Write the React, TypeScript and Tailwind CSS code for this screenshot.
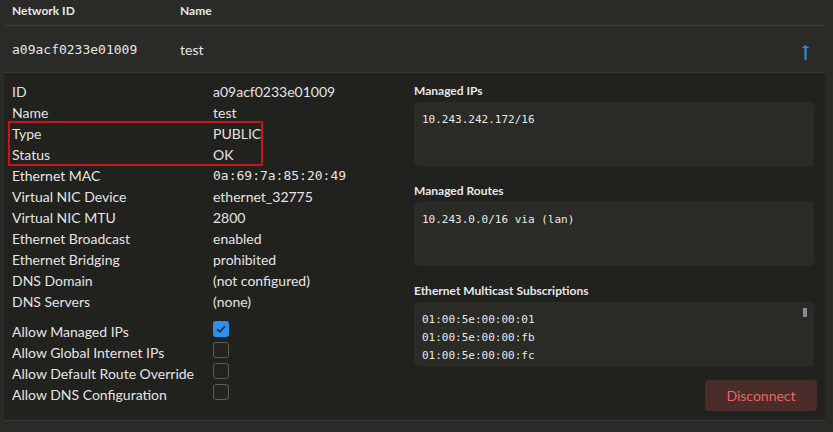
import React from 'react'

// ── 数据 ──────────────────────────────────────────────
const SANS = "font-['Segoe_UI','Lato','Liberation_Sans',sans-serif]"
const MONO = "font-['DejaVu_Sans_Mono','Liberation_Mono',monospace]"

type Row = { label: string; value: string; mono?: boolean }

const topRows: Row[] = [
  { label: 'ID', value: 'a09acf0233e01009' },
  { label: 'Name', value: 'test' },
]
const markedRows: Row[] = [
  { label: 'Type', value: 'PUBLIC' },
  { label: 'Status', value: 'OK' },
]
const restRows: Row[] = [
  { label: 'Ethernet MAC', value: '0a:69:7a:85:20:49', mono: true },
  { label: 'Virtual NIC Device', value: 'ethernet_32775' },
  { label: 'Virtual NIC MTU', value: '2800' },
  { label: 'Ethernet Broadcast', value: 'enabled' },
  { label: 'Ethernet Bridging', value: 'prohibited' },
  { label: 'DNS Domain', value: '(not configured)' },
  { label: 'DNS Servers', value: '(none)' },
]
const flags = [
  { label: 'Allow Managed IPs', on: true },
  { label: 'Allow Global Internet IPs', on: false },
  { label: 'Allow Default Route Override', on: false },
  { label: 'Allow DNS Configuration', on: false },
]

function InfoRow({ row }: { row: Row }) {
  return (
    <div className="flex h-[21px] items-center text-[14px] text-[#e4e4e4]">
      <span className="w-[201px] shrink-0">{row.label}</span>
      <span className={row.mono ? `${MONO} text-[13px]` : ''}>{row.value}</span>
    </div>
  )
}

function Checkbox({ on }: { on: boolean }) {
  if (on) {
    return (
      <span className="flex h-[16px] w-[16px] items-center justify-center rounded-[3px] bg-[#2f8ff0]">
        <svg width="10" height="8" viewBox="0 0 10 8" fill="none">
          <path d="M1 4.2 L3.8 6.8 L9 1.2" stroke="#1b2a3a" strokeWidth="1.6" />
        </svg>
      </span>
    )
  }
  return <span className="block h-[16px] w-[16px] rounded-[3px] border border-[#5c5c5a] bg-[#23231f]" />
}

function Section({ title, lines, scroll }: { title: string; lines: string[]; scroll?: boolean }) {
  return (
    <div className="flex flex-col">
      <div className="h-[16px] text-[12px] font-bold leading-[16px] text-[#e6e6e6]">{title}</div>
      <div className="relative mt-[3px] h-[64px] rounded-[4px] bg-[#2a2a26] px-[8px] pt-[9px]">
        {lines.map(l => (
          <div key={l} className={`${MONO} h-[18px] text-[11px] leading-[18px] text-[#e8e8e8]`}>{l}</div>
        ))}
        {scroll && <span className="absolute right-[7px] top-[6px] h-[9px] w-[4px] bg-[#8c8c8c]" />}
      </div>
    </div>
  )
}

export default function App() {
  return (
    <div className={`${SANS} h-[432px] w-[833px] overflow-hidden bg-[#2a2a26] pl-[4px] pr-[8px]`}>
      {/* ── 表头 ── */}
      <div className="flex h-[26px] items-start border-b border-[#3a3940] pt-[3px] text-[12px] font-bold leading-[16px] text-[#e6e6e6]">
        <span className="w-[176px] pl-[8px]">Network ID</span>
        <span>Name</span>
      </div>

      {/* ── 网络行 ── */}
      <div className="flex h-[47px] items-center border-b border-[#3a3940] text-[#e6e6e6]">
        <span className={`${MONO} w-[176px] pl-[8px] pt-[2px] text-[13px]`}>a09acf0233e01009</span>
        <span className="text-[14px]">test</span>
        <span className="ml-auto mr-[15px] pt-[6px]">
          <svg width="9" height="15" viewBox="0 0 9 15">
            <path d="M4.5 1.5 V15" stroke="#2f86e6" strokeWidth="2.2" />
            <path d="M0.5 3 H8.5 L4.5 0 Z" fill="#2f86e6" />
          </svg>
        </span>
      </div>

      {/* ── 展开详情 ── */}
      <div className="flex h-[348px] border-b border-[#3a3946] bg-[#21211e] pl-[8px] pr-[8px] pt-[8px]">
        <div className="w-[402px] shrink-0">
          {topRows.map(r => <InfoRow key={r.label} row={r} />)}
          <div className="relative">
            {markedRows.map(r => <InfoRow key={r.label} row={r} />)}
            <span className="pointer-events-none absolute -left-[4px] -top-[2px] h-[45px] w-[255px] border-2 border-[#c8141e]" />
          </div>
          {restRows.map(r => <InfoRow key={r.label} row={r} />)}

          <div className="mt-[9px]">
            {flags.map(f => (
              <div key={f.label} className="flex h-[21px] items-start text-[14px] text-[#e4e4e4]">
                <span className="w-[201px] shrink-0 pt-[1px] leading-[19px]">{f.label}</span>
                <Checkbox on={f.on} />
              </div>
            ))}
          </div>
        </div>

        <div className="flex flex-1 flex-col pt-[2px]">
          <div className="mr-[3px] flex flex-col gap-[17px]">
            <Section title="Managed IPs" lines={['10.243.242.172/16']} />
            <Section title="Managed Routes" lines={['10.243.0.0/16 via (lan)']} />
            <Section
              title="Ethernet Multicast Subscriptions"
              lines={['01:00:5e:00:00:01', '01:00:5e:00:00:fb', '01:00:5e:00:00:fc']}
              scroll
            />
          </div>
          <div className="mt-[14px] flex justify-end">
            <button
              type="button"
              className="h-[31px] w-[112px] rounded-[4px] bg-[#4a2c2a] text-[14px] text-[#e8675e]"
            >
              Disconnect
            </button>
          </div>
        </div>
      </div>
    </div>
  )
}
